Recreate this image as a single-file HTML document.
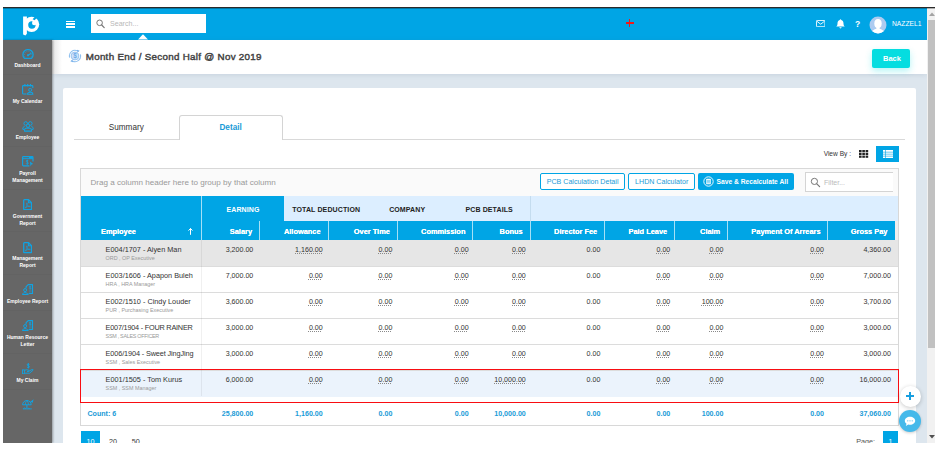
<!DOCTYPE html>
<html><head><meta charset="utf-8">
<style>
*{box-sizing:border-box;margin:0;padding:0}
html,body{width:944px;height:450px;background:#fff;overflow:hidden;font-family:"Liberation Sans",sans-serif;}
#shot{position:absolute;left:3px;top:7px;width:932px;height:436px;overflow:hidden;background:#dde6ee;}
.abs{position:absolute}
#topline{position:absolute;left:0;top:0;width:932px;height:1px;background:#2a2a2a;z-index:50}
#hdr{position:absolute;left:0;top:1px;width:924px;height:32px;background:#00a5e5;}
#side{position:absolute;left:0;top:33px;width:49px;height:403px;background:#666;box-shadow:1px 0 2px rgba(0,0,0,.35);z-index:5}
#titlebar{position:absolute;left:49px;top:33px;width:875px;height:34px;background:#fff;box-shadow:0 1px 5px rgba(60,90,120,.13)}
#card{position:absolute;left:60px;top:81px;width:853px;height:360px;background:#fff;border-radius:2px}
#sb{position:absolute;left:924px;top:1px;width:8px;height:435px;background:#f1f1f1}
#sbthumb{position:absolute;left:1px;top:12px;width:7px;height:328px;background:#c1c1c1}
.si{position:absolute;left:19px}
.sl{position:absolute;left:0;width:49px;text-align:center;font-size:5px;font-weight:bold;color:#fff;line-height:6px;white-space:nowrap;opacity:.999}
.t{position:absolute;white-space:nowrap;line-height:1}
</style></head><body>
<div id="shot">
<div id="topline"></div><div class="abs" style="left:0;top:1px;width:932px;height:1px;background:rgba(0,0,0,.28);z-index:50"></div>
<div id="hdr">
<svg class="abs" style="left:19px;top:8px" width="18" height="21" viewBox="0 0 18 21"><path d="M1.1 0.4 L4.9 0.4 L4.9 17.8 L3.4 19.6 L1.1 18.4 Z" fill="#fff"/><circle cx="9.6" cy="8.3" r="7.6" fill="#fff"/><circle cx="9.9" cy="9" r="3.7" fill="#00a5e5"/><circle cx="12.3" cy="6.9" r="2.3" fill="#fff"/><path d="M12.6 4.2 L15.4 1.2 L13 0.6 L10.6 3.2Z" fill="#00a5e5"/></svg>
<div class="abs" style="left:63px;top:12.5px;width:9px;height:1.6px;background:#fff"></div>
<div class="abs" style="left:63px;top:15.3px;width:9px;height:1.6px;background:#fff"></div>
<div class="abs" style="left:63px;top:18.1px;width:9px;height:1.6px;background:#fff"></div>
<div class="abs" style="left:88px;top:6px;width:115px;height:19px;background:#fff"></div>
<svg class="abs" style="left:92px;top:10px" width="12" height="12" viewBox="0 0 12 12"><circle cx="4.6" cy="4.8" r="2.8" fill="none" stroke="#777" stroke-width="1"/><path d="M6.7 7 L9.2 9.6" stroke="#777" stroke-width="1.2" stroke-linecap="round"/></svg>
<div class="t" style="left:107px;top:13px;font-size:7.1px;color:#b8b8b8">Search...</div>
<svg class="abs" style="left:135px;top:26.2px" width="10" height="5.8" viewBox="0 0 10.4 5.5"><path d="M0 5.5 L5.2 0 L10.4 5.5Z" fill="#fff"/></svg>
<div class="abs" style="left:622.5px;top:14.2px;width:8px;height:1.6px;background:#f21818"></div><div class="abs" style="left:625.7px;top:11px;width:1.6px;height:8px;background:#f21818"></div>
<svg class="abs" style="left:813px;top:12px" width="9.4" height="7.2" viewBox="0 0 9.4 7.2"><rect x="0.45" y="0.45" width="8.5" height="6.3" rx="0.8" fill="none" stroke="#fff" stroke-width="0.9"/><path d="M0.8 1.2 L4.7 4.2 L8.6 1.2" fill="none" stroke="#fff" stroke-width="0.9"/></svg>
<svg class="abs" style="left:833px;top:11px" width="9" height="10" viewBox="0 0 9 10"><path d="M4.5 0.3 C5 0.3 5.2 0.7 5.2 1.1 C6.8 1.5 7.5 2.8 7.5 4.4 C7.5 6 8 6.8 8.8 7.5 L0.2 7.5 C1 6.8 1.5 6 1.5 4.4 C1.5 2.8 2.2 1.5 3.8 1.1 C3.8 0.7 4 0.3 4.5 0.3Z M3.4 8.2 L5.6 8.2 C5.6 8.9 5.1 9.4 4.5 9.4 C3.9 9.4 3.4 8.9 3.4 8.2Z" fill="#fff"/></svg>
<div class="t" style="left:852px;top:12px;font-size:8.5px;font-weight:bold;color:#fff">?</div>
<svg class="abs" style="left:866px;top:8px" width="18" height="18" viewBox="0 0 18 18"><defs><clipPath id="av"><circle cx="9" cy="9" r="8.5"/></clipPath></defs><circle cx="9" cy="9" r="8.5" fill="#adcbf0"/><g clip-path="url(#av)" fill="#fff"><ellipse cx="9" cy="7.6" rx="3.7" ry="4.5"/><path d="M2.2 18 C2.6 14.2 5.5 13.4 7.4 12.8 L7.4 11 L10.6 11 L10.6 12.8 C12.5 13.4 15.4 14.2 15.8 18Z"/></g></svg>
<div class="t" style="left:889px;top:13px;font-size:6.7px;color:#fff">NAZZEL1</div>
</div>
<div id="titlebar">
<div class="abs" style="left:0;top:0;width:10px;height:34px;background:linear-gradient(90deg,#e4e4e4,#fff)"></div>
<svg class="abs" style="left:15.8px;top:8.9px" width="14" height="14" viewBox="0 0 14 14"><circle cx="7" cy="7" r="3.9" fill="#cfe3f9" stroke="#86b9ec" stroke-width="0.8"/><path d="M1.7 8.6 A5.5 5.5 0 0 1 9.6 2.1" fill="none" stroke="#8fc0ef" stroke-width="1.1"/><path d="M12.3 5.4 A5.5 5.5 0 0 1 4.4 11.9" fill="none" stroke="#8fc0ef" stroke-width="1.1"/><path d="M9 0.8 L11.6 1.8 L9.6 3.6Z M5 13.2 L2.4 12.2 L4.4 10.4Z" fill="#6eaae8"/><text x="7" y="9.3" font-size="6.4" font-weight="bold" text-anchor="middle" fill="#6eaae8" font-family="Liberation Sans">$</text></svg>
<div class="t" id="ttl" style="left:33.7px;top:11.5px;font-size:9.8px;letter-spacing:0.29px;font-weight:normal;color:#444;-webkit-text-stroke:0.45px #444">Month End / Second Half @ Nov 2019</div>
<div class="abs" style="left:820px;top:9px;width:38px;height:19px;background:#05dde0;border-radius:2px;box-shadow:0 3px 7px rgba(5,221,224,.3)"></div>
<div class="t" style="left:831px;top:15px;font-size:7.5px;font-weight:bold;color:#fff">Back</div>
</div>
<div id="side"><svg class="abs" style="left:18.5px;top:8.9px" width="12" height="11" viewBox="0 0 12 11"><path d="M2.4 9.3 A5.1 5.1 0 1 1 9.6 9.3 Z" fill="none" stroke="#10a3e2" stroke-width="1.3" stroke-linejoin="round"/><path d="M2.9 7.6 A3.6 3.6 0 1 1 9.1 7.6" fill="none" stroke="#10a3e2" stroke-width="1.1" stroke-dasharray="0.7 1.3" opacity=".75"/><path d="M6 6.3 L8.9 4.5" stroke="#10a3e2" stroke-width="1.2" stroke-linecap="round"/><circle cx="6" cy="6.3" r="1.15" fill="#10a3e2"/></svg><div class="sl" style="top:22.4px">Dashboard</div><div class="abs" style="left:0;top:34.0px;width:49px;height:1px;background:#636363"></div><svg class="si" style="top:44.2px" width="12" height="11" viewBox="0 0 12 11"><path d="M4.6 10 L1.3 10 Q0.6 10 0.6 9.3 L0.6 2.3 Q0.6 1.6 1.3 1.6 L10.1 1.6 Q10.8 1.6 10.8 2.3 L10.8 3.9" fill="none" stroke="#10a3e2" stroke-width="1.15"/><path d="M2.9 0.5 L2.9 1.8 M5.7 0.5 L5.7 1.8 M8.5 0.5 L8.5 1.8" stroke="#10a3e2" stroke-width="1.2" stroke-linecap="round"/><circle cx="8.2" cy="5.9" r="1.55" fill="none" stroke="#10a3e2" stroke-width="1"/><path d="M5.5 10.2 C5.5 7.6 10.9 7.6 10.9 10.2 Z" fill="none" stroke="#10a3e2" stroke-width="1.05" stroke-linejoin="round"/></svg><div class="sl" style="top:58.2px">My Calendar</div><div class="abs" style="left:0;top:70.0px;width:49px;height:1px;background:#636363"></div><svg class="si" style="top:80.7px" width="12" height="11" viewBox="0 0 12 11"><circle cx="3.7" cy="2.5" r="1.8" fill="none" stroke="#10a3e2" stroke-width="1"/><circle cx="8.3" cy="2.5" r="1.8" fill="none" stroke="#10a3e2" stroke-width="1"/><ellipse cx="6" cy="4.7" rx="1.5" ry="1.8" fill="#666" stroke="#10a3e2" stroke-width="1"/><path d="M2.5 10.1 L2.5 8.9 Q2.5 7.3 4.6 7.1 L7.4 7.1 Q9.5 7.3 9.5 8.9 L9.5 10.1 Z" fill="none" stroke="#10a3e2" stroke-width="1.05" stroke-linejoin="round"/><path d="M2.3 8.7 L0.7 8.2 Q0.5 6 2.7 5.2 M9.7 8.7 L11.3 8.2 Q11.5 6 9.3 5.2" fill="none" stroke="#10a3e2" stroke-width="1"/></svg><div class="sl" style="top:94.0px">Employee</div><div class="abs" style="left:0;top:106.0px;width:49px;height:1px;background:#636363"></div><svg class="si" style="top:116.1px" width="12" height="11" viewBox="0 0 12 11"><path d="M7.4 9.8 L1.4 9.8 Q0.6 9.8 0.6 9 L0.6 1.4 Q0.6 0.6 1.4 0.6 L10.2 0.6 Q11 0.6 11 1.4 L11 5.4" fill="none" stroke="#10a3e2" stroke-width="1.15"/><path d="M0.6 2.7 L11 2.7" stroke="#10a3e2" stroke-width="1"/><rect x="7" y="0.7" width="3.8" height="2" fill="#10a3e2"/><path d="M6.3 5 C6.2 4.2 4.2 4.1 4.2 5.2 C4.2 6.3 6.4 6 6.4 7.2 C6.4 8.3 4.2 8.2 4.1 7.4 M5.3 3.7 L5.3 8.8" fill="none" stroke="#10a3e2" stroke-width="0.85"/><path d="M7.9 5.4 L11.2 8 L9.4 8.5 L8.6 10.4 Z" fill="#10a3e2"/></svg><div class="sl" style="top:130.0px">Payroll</div><div class="sl" style="top:137.2px">Management</div><div class="abs" style="left:0;top:148.5px;width:49px;height:1px;background:#636363"></div><svg class="si" style="top:158.9px;left:20px" width="9.2" height="11.4" viewBox="0 0 9.2 11.4"><path d="M1.6 0.7 L5.6 0.7 L8.5 3.6 L8.5 9.9 Q8.5 10.7 7.7 10.7 L1.5 10.7 Q0.7 10.7 0.7 9.9 L0.7 1.5 Q0.7 0.7 1.5 0.7Z" fill="none" stroke="#10a3e2" stroke-width="1.3" stroke-linejoin="round"/><path d="M5.4 0.9 L5.4 3.8 L8.3 3.8" fill="none" stroke="#10a3e2" stroke-width="1.1"/><path d="M2.3 8.9 C3.4 7.8 4.3 5.8 4.2 4.2 C4.2 3.6 3.5 3.7 3.6 4.4 C3.8 6 5.2 7.5 6.9 7.7 C7.5 7.7 7.3 7 6.6 7.1 C5.1 7.2 3.4 7.9 2.3 8.9Z" fill="none" stroke="#10a3e2" stroke-width="0.7"/></svg><div class="sl" style="top:173.2px">Government</div><div class="sl" style="top:180.2px">Report</div><div class="abs" style="left:0;top:191.0px;width:49px;height:1px;background:#636363"></div><svg class="si" style="top:202.2px;left:20px" width="9.2" height="11.4" viewBox="0 0 9.2 11.4"><path d="M1.6 0.7 L5.6 0.7 L8.5 3.6 L8.5 9.9 Q8.5 10.7 7.7 10.7 L1.5 10.7 Q0.7 10.7 0.7 9.9 L0.7 1.5 Q0.7 0.7 1.5 0.7Z" fill="none" stroke="#10a3e2" stroke-width="1.3" stroke-linejoin="round"/><path d="M5.4 0.9 L5.4 3.8 L8.3 3.8" fill="none" stroke="#10a3e2" stroke-width="1.1"/><path d="M2.3 8.9 C3.4 7.8 4.3 5.8 4.2 4.2 C4.2 3.6 3.5 3.7 3.6 4.4 C3.8 6 5.2 7.5 6.9 7.7 C7.5 7.7 7.3 7 6.6 7.1 C5.1 7.2 3.4 7.9 2.3 8.9Z" fill="none" stroke="#10a3e2" stroke-width="0.7"/></svg><div class="sl" style="top:215.4px">Management</div><div class="sl" style="top:222.4px">Report</div><div class="abs" style="left:0;top:233.5px;width:49px;height:1px;background:#636363"></div><svg class="si" style="top:244px" width="12" height="11" viewBox="0 0 12 11"><path d="M4.1 4.6 L4.1 2.7 L6.2 0.6 L10.5 0.6 L10.5 9.5 L6.6 9.5" fill="none" stroke="#10a3e2" stroke-width="1.15" stroke-linejoin="round"/><path d="M8.8 2.7 C8.7 2.1 7.4 2.1 7.4 2.9 C7.4 3.7 8.9 3.5 8.9 4.4 C8.9 5.2 7.4 5.1 7.3 4.5 M8.1 1.7 L8.1 5.7" fill="none" stroke="#10a3e2" stroke-width="0.75"/><path d="M6.9 6.9 L9.5 6.9 M6.9 8 L9.5 8" stroke="#10a3e2" stroke-width="0.6" opacity=".8"/><circle cx="3.1" cy="6.1" r="1.5" fill="none" stroke="#10a3e2" stroke-width="1"/><path d="M0.6 10.4 C0.6 8 5.6 8 5.6 10.4 Z" fill="none" stroke="#10a3e2" stroke-width="1" stroke-linejoin="round"/><path d="M0.3 10.5 L6.6 10.5" stroke="#10a3e2" stroke-width="0.9"/></svg><div class="sl" style="top:258.2px">Employee Report</div><div class="abs" style="left:0;top:269.5px;width:49px;height:1px;background:#636363"></div><svg class="si" style="top:280.4px" width="12" height="11" viewBox="0 0 12 11"><path d="M4.1 4.6 L4.1 2.7 L6.2 0.6 L10.5 0.6 L10.5 9.5 L6.6 9.5" fill="none" stroke="#10a3e2" stroke-width="1.15" stroke-linejoin="round"/><path d="M8.8 2.7 C8.7 2.1 7.4 2.1 7.4 2.9 C7.4 3.7 8.9 3.5 8.9 4.4 C8.9 5.2 7.4 5.1 7.3 4.5 M8.1 1.7 L8.1 5.7" fill="none" stroke="#10a3e2" stroke-width="0.75"/><path d="M6.9 6.9 L9.5 6.9 M6.9 8 L9.5 8" stroke="#10a3e2" stroke-width="0.6" opacity=".8"/><circle cx="3.1" cy="6.1" r="1.5" fill="none" stroke="#10a3e2" stroke-width="1"/><path d="M0.6 10.4 C0.6 8 5.6 8 5.6 10.4 Z" fill="none" stroke="#10a3e2" stroke-width="1" stroke-linejoin="round"/><path d="M0.3 10.5 L6.6 10.5" stroke="#10a3e2" stroke-width="0.9"/></svg><div class="sl" style="top:294.0px">Human Resource</div><div class="sl" style="top:301.0px">Letter</div><div class="abs" style="left:0;top:312.5px;width:49px;height:1px;background:#636363"></div><svg class="si" style="top:322.8px" width="12" height="11.4" viewBox="0 0 12 11.4"><path d="M7.3 1.6 C7.1 0.7 5.2 0.7 5.2 1.8 C5.2 2.9 7.4 2.6 7.4 3.8 C7.4 4.9 5.2 4.8 5 3.9 M6.3 0.1 L6.3 5.5" fill="none" stroke="#10a3e2" stroke-width="0.95"/><rect x="0.5" y="6.9" width="1.9" height="3.9" fill="none" stroke="#10a3e2" stroke-width="0.9"/><path d="M2.6 7.3 L4.6 6.7 L7 7.3 Q7.8 7.7 7.2 8.3 L5 8.5 M7.5 7.8 L10.2 6.5 Q11.5 6.3 11.1 7.2 L7.6 10.2 L2.6 10.2" fill="none" stroke="#10a3e2" stroke-width="0.95" stroke-linejoin="round"/></svg><div class="sl" style="top:337.0px">My Claim</div><div class="abs" style="left:0;top:348.5px;width:49px;height:1px;background:#636363"></div><svg class="si" style="top:359.3px" width="12" height="11" viewBox="0 0 12 11"><path d="M0.6 5.8 A4.3 4.3 0 0 1 9.2 5.8 Z" fill="none" stroke="#10a3e2" stroke-width="1" stroke-linejoin="round"/><path d="M3.3 5.8 Q3.5 2.6 4.9 1.5 Q6.3 2.6 6.5 5.8" fill="none" stroke="#10a3e2" stroke-width="0.8"/><path d="M4.9 5.8 L4.9 9.4" stroke="#10a3e2" stroke-width="1"/><path d="M0.8 9.9 L9.8 9.9" stroke="#10a3e2" stroke-width="0.9"/><path d="M1.4 9.7 Q2.4 8.3 3.8 9.6 M5.8 9.7 Q6.6 8.9 7.6 9.7" fill="none" stroke="#10a3e2" stroke-width="0.8"/><path d="M8 3.1 L11.6 0.3 L10.6 3.9 L9.8 2.9 L8.6 4 L8.5 2.9 Z" fill="#10a3e2"/></svg></div>
<div id="card"></div>
<div id="o" style="position:absolute;left:-3px;top:-7px;width:944px;height:450px"><!--GRID-->
<div class="abs" style="left:74.0px;top:139.0px;width:831.0px;height:1.0px;background:#d9d9d9"></div>
<div class="abs" style="left:178.7px;top:114.8px;width:103.9px;height:25.2px;background:#fff;border:1px solid #d4d4d4;border-bottom:none;border-radius:3px 3px 0 0"></div>
<div class="t" style="left:26.3px;width:200px;text-align:center;top:123.8px;font-size:8.2px;color:#333">Summary</div>
<div class="t" style="left:130.6px;width:200px;text-align:center;top:123.8px;font-size:8.2px;color:#1a9bd7;font-weight:bold">Detail</div>
<div class="t" style="right:93.0px;top:150.7px;font-size:6.6px;color:#333">View By :</div>
<svg class="abs" style="left:859.3px;top:149.5px" width="9.4" height="8" viewBox="0 0 9.4 8"><g fill="#222"><rect x="0.0" y="0.0" width="2.6" height="2.2"/><rect x="0.0" y="2.8" width="2.6" height="2.2"/><rect x="0.0" y="5.6" width="2.6" height="2.2"/><rect x="3.3" y="0.0" width="2.6" height="2.2"/><rect x="3.3" y="2.8" width="2.6" height="2.2"/><rect x="3.3" y="5.6" width="2.6" height="2.2"/><rect x="6.6" y="0.0" width="2.6" height="2.2"/><rect x="6.6" y="2.8" width="2.6" height="2.2"/><rect x="6.6" y="5.6" width="2.6" height="2.2"/></g></svg>
<div class="abs" style="left:876.0px;top:146.0px;width:22.7px;height:16.0px;background:#00a5e5"></div>
<svg class="abs" style="left:882.5px;top:150px" width="10" height="8" viewBox="0 0 10 8"><rect x="0" y="0" width="10" height="8" fill="#fff"/><g fill="#00a5e5"><rect x="2.4" y="0" width="0.6" height="8"/><rect x="0" y="1.8" width="10" height="0.6"/><rect x="0" y="3.8" width="10" height="0.6"/><rect x="0" y="5.8" width="10" height="0.6"/></g></svg>
<div class="abs" style="left:80.2px;top:168.0px;width:818.5px;height:257.5px;background:#fff;border:1px solid #d8d8d8"></div>
<div class="abs" style="left:81.2px;top:169.0px;width:816.5px;height:27.0px;background:#fafafa"></div>
<div class="t" style="left:90.4px;top:178.5px;font-size:8.1px;color:#999">Drag a column header here to group by that column</div>
<div class="abs" style="left:539.7px;top:173.3px;width:85.8px;height:16.6px;background:#fff;border:1px solid #00a5e5;border-radius:2px"></div>
<div class="t" style="left:482.6px;width:200px;text-align:center;top:179.3px;font-size:7.1px;color:#1a9bd7">PCB Calculation Detail</div>
<div class="abs" style="left:628.0px;top:173.3px;width:67.4px;height:16.6px;background:#fff;border:1px solid #00a5e5;border-radius:2px"></div>
<div class="t" style="left:561.7px;width:200px;text-align:center;top:179.3px;font-size:7.1px;color:#1a9bd7">LHDN Calculator</div>
<div class="abs" style="left:698.0px;top:173.3px;width:95.9px;height:16.6px;background:#00a5e5;border-radius:2px"></div>
<svg class="abs" style="left:702.5px;top:176.3px" width="11" height="11" viewBox="0 0 11 11"><circle cx="5.5" cy="5.5" r="4.7" fill="none" stroke="#fff" stroke-width="0.9"/><rect x="3.2" y="2.8" width="4.6" height="5.4" rx="0.5" fill="#fff"/><path d="M3.8 4.4 L7.2 4.4 M3.8 5.6 L7.2 5.6 M3.8 6.8 L7.2 6.8" stroke="#00a5e5" stroke-width="0.5"/></svg>
<div class="t" style="left:716.5px;top:179.4px;font-size:6.7px;color:#fff;font-weight:bold">Save &amp; Recalculate All</div>
<div class="abs" style="left:805.0px;top:172.4px;width:88.3px;height:19.2px;background:#fff;border:1px solid #d4d4d4;border-right:none"></div>
<svg class="abs" style="left:810px;top:177px" width="11" height="11" viewBox="0 0 11 11"><circle cx="4.4" cy="4.4" r="3.1" fill="none" stroke="#777" stroke-width="1"/><path d="M6.8 6.8 L9.6 9.6" stroke="#777" stroke-width="1.2" stroke-linecap="round"/></svg>
<div class="t" style="left:824.0px;top:178.7px;font-size:7px;color:#bbb">Filter...</div>
<div class="abs" style="left:81.0px;top:196.0px;width:817.0px;height:25.0px;background:#dceeff"></div>
<div class="abs" style="left:81.0px;top:196.0px;width:203.0px;height:25.0px;background:#00a5e5"></div>
<div class="abs" style="left:81.0px;top:221.0px;width:814.0px;height:19.3px;background:#00a5e5"></div>
<div class="abs" style="left:895.0px;top:221.0px;width:3.0px;height:19.3px;background:#efefef"></div>
<div class="abs" style="left:201.0px;top:196.0px;width:1.0px;height:44.3px;background:rgba(255,255,255,.65)"></div>
<div class="abs" style="left:259.2px;top:221.0px;width:1.0px;height:19.3px;background:rgba(255,255,255,.65)"></div>
<div class="abs" style="left:327.6px;top:221.0px;width:1.0px;height:19.3px;background:rgba(255,255,255,.65)"></div>
<div class="abs" style="left:396.6px;top:221.0px;width:1.0px;height:19.3px;background:rgba(255,255,255,.65)"></div>
<div class="abs" style="left:471.9px;top:221.0px;width:1.0px;height:19.3px;background:rgba(255,255,255,.65)"></div>
<div class="abs" style="left:529.5px;top:221.0px;width:1.0px;height:19.3px;background:rgba(255,255,255,.65)"></div>
<div class="abs" style="left:603.7px;top:221.0px;width:1.0px;height:19.3px;background:rgba(255,255,255,.65)"></div>
<div class="abs" style="left:674.2px;top:221.0px;width:1.0px;height:19.3px;background:rgba(255,255,255,.65)"></div>
<div class="abs" style="left:727.0px;top:221.0px;width:1.0px;height:19.3px;background:rgba(255,255,255,.65)"></div>
<div class="abs" style="left:827.1px;top:221.0px;width:1.0px;height:19.3px;background:rgba(255,255,255,.65)"></div>
<div class="abs" style="left:529.6px;top:196.0px;width:0.8px;height:25.0px;background:rgba(190,215,235,.8)"></div>
<div class="t" style="left:143.0px;width:200px;text-align:center;top:206.0px;font-size:7px;color:#fff;font-weight:bold;letter-spacing:0.12px;">EARNING</div>
<div class="t" style="left:226.2px;width:200px;text-align:center;top:206.0px;font-size:7px;color:#222;font-weight:bold;letter-spacing:0.12px;">TOTAL DEDUCTION</div>
<div class="t" style="left:307.2px;width:200px;text-align:center;top:206.0px;font-size:7px;color:#222;font-weight:bold;letter-spacing:0.12px;">COMPANY</div>
<div class="t" style="left:389.2px;width:200px;text-align:center;top:206.0px;font-size:7px;color:#222;font-weight:bold;letter-spacing:0.12px;">PCB DETAILS</div>
<div class="t" style="left:101.0px;top:228.0px;font-size:7.4px;color:#fff;font-weight:bold;text-shadow:0 0 0.4px #fff">Employee</div>
<svg class="abs" style="left:187.5px;top:228px" width="5" height="7" viewBox="0 0 5 7"><path d="M2.5 0.4 L2.5 6.8 M0.5 2.6 L2.5 0.5 L4.5 2.6" fill="none" stroke="#fff" stroke-width="1"/></svg>
<div class="t" style="right:692.0px;top:228.0px;font-size:7.4px;color:#fff;font-weight:bold;text-shadow:0 0 0.4px #fff">Salary</div>
<div class="t" style="right:623.5px;top:228.0px;font-size:7.4px;color:#fff;font-weight:bold;text-shadow:0 0 0.4px #fff">Allowance</div>
<div class="t" style="right:554.2px;top:228.0px;font-size:7.4px;color:#fff;font-weight:bold;text-shadow:0 0 0.4px #fff">Over Time</div>
<div class="t" style="right:478.6px;top:228.0px;font-size:7.4px;color:#fff;font-weight:bold;text-shadow:0 0 0.4px #fff">Commission</div>
<div class="t" style="right:421.4px;top:228.0px;font-size:7.4px;color:#fff;font-weight:bold;text-shadow:0 0 0.4px #fff">Bonus</div>
<div class="t" style="right:346.8px;top:228.0px;font-size:7.4px;color:#fff;font-weight:bold;text-shadow:0 0 0.4px #fff">Director Fee</div>
<div class="t" style="right:276.9px;top:228.0px;font-size:7.4px;color:#fff;font-weight:bold;text-shadow:0 0 0.4px #fff">Paid Leave</div>
<div class="t" style="right:223.8px;top:228.0px;font-size:7.4px;color:#fff;font-weight:bold;text-shadow:0 0 0.4px #fff">Claim</div>
<div class="t" style="right:123.5px;top:228.0px;font-size:7.4px;color:#fff;font-weight:bold;text-shadow:0 0 0.4px #fff">Payment Of Arrears</div>
<div class="t" style="right:56.6px;top:228.0px;font-size:7.4px;color:#fff;font-weight:bold;text-shadow:0 0 0.4px #fff">Gross Pay</div>
<div class="abs" style="left:81.0px;top:240.3px;width:817.0px;height:26.1px;background:#e6e6e6"></div>
<div class="abs" style="left:81.0px;top:265.9px;width:817.0px;height:1.0px;background:#dcdcdc"></div>
<div class="t" style="left:105.6px;top:246.2px;font-size:7.3px;color:#333;letter-spacing:0px">E004/1707 - Aiyen Man</div>
<div class="t" style="left:105.6px;top:255.7px;font-size:5.4px;color:#999;letter-spacing:0px">ORD , OP Executive</div>
<div class="t" style="right:690.7px;top:247.1px;font-size:7.1px;color:#333;">3,200.00</div>
<div class="t" style="right:621.3px;top:247.1px;font-size:7.1px;color:#333;text-decoration:underline dotted #8a8a8a;text-decoration-thickness:1px;text-underline-offset:1.3px">1,160.00</div>
<div class="t" style="right:551.6px;top:247.1px;font-size:7.1px;color:#333;text-decoration:underline dotted #8a8a8a;text-decoration-thickness:1px;text-underline-offset:1.3px">0.00</div>
<div class="t" style="right:475.4px;top:247.1px;font-size:7.1px;color:#333;text-decoration:underline dotted #8a8a8a;text-decoration-thickness:1px;text-underline-offset:1.3px">0.00</div>
<div class="t" style="right:418.2px;top:247.1px;font-size:7.1px;color:#333;text-decoration:underline dotted #8a8a8a;text-decoration-thickness:1px;text-underline-offset:1.3px">0.00</div>
<div class="t" style="right:343.6px;top:247.1px;font-size:7.1px;color:#333;">0.00</div>
<div class="t" style="right:273.7px;top:247.1px;font-size:7.1px;color:#333;text-decoration:underline dotted #8a8a8a;text-decoration-thickness:1px;text-underline-offset:1.3px">0.00</div>
<div class="t" style="right:220.6px;top:247.1px;font-size:7.1px;color:#333;text-decoration:underline dotted #8a8a8a;text-decoration-thickness:1px;text-underline-offset:1.3px">0.00</div>
<div class="t" style="right:120.0px;top:247.1px;font-size:7.1px;color:#333;text-decoration:underline dotted #8a8a8a;text-decoration-thickness:1px;text-underline-offset:1.3px">0.00</div>
<div class="t" style="right:53.0px;top:247.1px;font-size:7.1px;color:#333;">4,360.00</div>
<div class="abs" style="left:81.0px;top:291.9px;width:817.0px;height:1.0px;background:#dcdcdc"></div>
<div class="t" style="left:105.6px;top:272.2px;font-size:7.3px;color:#333;letter-spacing:0px">E003/1606 - Apapon Buleh</div>
<div class="t" style="left:105.6px;top:281.7px;font-size:5.4px;color:#999;letter-spacing:0px">HRA , HRA Manager</div>
<div class="t" style="right:690.7px;top:273.1px;font-size:7.1px;color:#333;">7,000.00</div>
<div class="t" style="right:621.3px;top:273.1px;font-size:7.1px;color:#333;text-decoration:underline dotted #8a8a8a;text-decoration-thickness:1px;text-underline-offset:1.3px">0.00</div>
<div class="t" style="right:551.6px;top:273.1px;font-size:7.1px;color:#333;text-decoration:underline dotted #8a8a8a;text-decoration-thickness:1px;text-underline-offset:1.3px">0.00</div>
<div class="t" style="right:475.4px;top:273.1px;font-size:7.1px;color:#333;text-decoration:underline dotted #8a8a8a;text-decoration-thickness:1px;text-underline-offset:1.3px">0.00</div>
<div class="t" style="right:418.2px;top:273.1px;font-size:7.1px;color:#333;text-decoration:underline dotted #8a8a8a;text-decoration-thickness:1px;text-underline-offset:1.3px">0.00</div>
<div class="t" style="right:343.6px;top:273.1px;font-size:7.1px;color:#333;">0.00</div>
<div class="t" style="right:273.7px;top:273.1px;font-size:7.1px;color:#333;text-decoration:underline dotted #8a8a8a;text-decoration-thickness:1px;text-underline-offset:1.3px">0.00</div>
<div class="t" style="right:220.6px;top:273.1px;font-size:7.1px;color:#333;text-decoration:underline dotted #8a8a8a;text-decoration-thickness:1px;text-underline-offset:1.3px">0.00</div>
<div class="t" style="right:120.0px;top:273.1px;font-size:7.1px;color:#333;text-decoration:underline dotted #8a8a8a;text-decoration-thickness:1px;text-underline-offset:1.3px">0.00</div>
<div class="t" style="right:53.0px;top:273.1px;font-size:7.1px;color:#333;">7,000.00</div>
<div class="abs" style="left:81.0px;top:318.0px;width:817.0px;height:1.0px;background:#dcdcdc"></div>
<div class="t" style="left:105.6px;top:298.3px;font-size:7.3px;color:#333;letter-spacing:0px">E002/1510 - Cindy Louder</div>
<div class="t" style="left:105.6px;top:307.8px;font-size:5.4px;color:#999;letter-spacing:0px">PUR , Purchasing Executive</div>
<div class="t" style="right:690.7px;top:299.2px;font-size:7.1px;color:#333;">3,600.00</div>
<div class="t" style="right:621.3px;top:299.2px;font-size:7.1px;color:#333;text-decoration:underline dotted #8a8a8a;text-decoration-thickness:1px;text-underline-offset:1.3px">0.00</div>
<div class="t" style="right:551.6px;top:299.2px;font-size:7.1px;color:#333;text-decoration:underline dotted #8a8a8a;text-decoration-thickness:1px;text-underline-offset:1.3px">0.00</div>
<div class="t" style="right:475.4px;top:299.2px;font-size:7.1px;color:#333;text-decoration:underline dotted #8a8a8a;text-decoration-thickness:1px;text-underline-offset:1.3px">0.00</div>
<div class="t" style="right:418.2px;top:299.2px;font-size:7.1px;color:#333;text-decoration:underline dotted #8a8a8a;text-decoration-thickness:1px;text-underline-offset:1.3px">0.00</div>
<div class="t" style="right:343.6px;top:299.2px;font-size:7.1px;color:#333;">0.00</div>
<div class="t" style="right:273.7px;top:299.2px;font-size:7.1px;color:#333;text-decoration:underline dotted #8a8a8a;text-decoration-thickness:1px;text-underline-offset:1.3px">0.00</div>
<div class="t" style="right:220.6px;top:299.2px;font-size:7.1px;color:#333;text-decoration:underline dotted #8a8a8a;text-decoration-thickness:1px;text-underline-offset:1.3px">100.00</div>
<div class="t" style="right:120.0px;top:299.2px;font-size:7.1px;color:#333;text-decoration:underline dotted #8a8a8a;text-decoration-thickness:1px;text-underline-offset:1.3px">0.00</div>
<div class="t" style="right:53.0px;top:299.2px;font-size:7.1px;color:#333;">3,700.00</div>
<div class="abs" style="left:81.0px;top:344.0px;width:817.0px;height:1.0px;background:#dcdcdc"></div>
<div class="t" style="left:105.6px;top:324.3px;font-size:7.3px;color:#333;letter-spacing:-0.22px">E007/1904 - FOUR RAINER</div>
<div class="t" style="left:105.6px;top:333.8px;font-size:5.4px;color:#999;letter-spacing:-0.28px">SSM , SALES OFFICER</div>
<div class="t" style="right:690.7px;top:325.2px;font-size:7.1px;color:#333;">3,000.00</div>
<div class="t" style="right:621.3px;top:325.2px;font-size:7.1px;color:#333;text-decoration:underline dotted #8a8a8a;text-decoration-thickness:1px;text-underline-offset:1.3px">0.00</div>
<div class="t" style="right:551.6px;top:325.2px;font-size:7.1px;color:#333;text-decoration:underline dotted #8a8a8a;text-decoration-thickness:1px;text-underline-offset:1.3px">0.00</div>
<div class="t" style="right:475.4px;top:325.2px;font-size:7.1px;color:#333;text-decoration:underline dotted #8a8a8a;text-decoration-thickness:1px;text-underline-offset:1.3px">0.00</div>
<div class="t" style="right:418.2px;top:325.2px;font-size:7.1px;color:#333;text-decoration:underline dotted #8a8a8a;text-decoration-thickness:1px;text-underline-offset:1.3px">0.00</div>
<div class="t" style="right:343.6px;top:325.2px;font-size:7.1px;color:#333;">0.00</div>
<div class="t" style="right:273.7px;top:325.2px;font-size:7.1px;color:#333;text-decoration:underline dotted #8a8a8a;text-decoration-thickness:1px;text-underline-offset:1.3px">0.00</div>
<div class="t" style="right:220.6px;top:325.2px;font-size:7.1px;color:#333;text-decoration:underline dotted #8a8a8a;text-decoration-thickness:1px;text-underline-offset:1.3px">0.00</div>
<div class="t" style="right:120.0px;top:325.2px;font-size:7.1px;color:#333;text-decoration:underline dotted #8a8a8a;text-decoration-thickness:1px;text-underline-offset:1.3px">0.00</div>
<div class="t" style="right:53.0px;top:325.2px;font-size:7.1px;color:#333;">3,000.00</div>
<div class="abs" style="left:81.0px;top:370.1px;width:817.0px;height:1.0px;background:#dcdcdc"></div>
<div class="t" style="left:105.6px;top:350.4px;font-size:7.3px;color:#333;letter-spacing:-0.12px">E006/1904 - Sweet JingJing</div>
<div class="t" style="left:105.6px;top:359.9px;font-size:5.4px;color:#999;letter-spacing:0px">SSM , Sales Executive</div>
<div class="t" style="right:690.7px;top:351.3px;font-size:7.1px;color:#333;">3,000.00</div>
<div class="t" style="right:621.3px;top:351.3px;font-size:7.1px;color:#333;text-decoration:underline dotted #8a8a8a;text-decoration-thickness:1px;text-underline-offset:1.3px">0.00</div>
<div class="t" style="right:551.6px;top:351.3px;font-size:7.1px;color:#333;text-decoration:underline dotted #8a8a8a;text-decoration-thickness:1px;text-underline-offset:1.3px">0.00</div>
<div class="t" style="right:475.4px;top:351.3px;font-size:7.1px;color:#333;text-decoration:underline dotted #8a8a8a;text-decoration-thickness:1px;text-underline-offset:1.3px">0.00</div>
<div class="t" style="right:418.2px;top:351.3px;font-size:7.1px;color:#333;text-decoration:underline dotted #8a8a8a;text-decoration-thickness:1px;text-underline-offset:1.3px">0.00</div>
<div class="t" style="right:343.6px;top:351.3px;font-size:7.1px;color:#333;">0.00</div>
<div class="t" style="right:273.7px;top:351.3px;font-size:7.1px;color:#333;text-decoration:underline dotted #8a8a8a;text-decoration-thickness:1px;text-underline-offset:1.3px">0.00</div>
<div class="t" style="right:220.6px;top:351.3px;font-size:7.1px;color:#333;text-decoration:underline dotted #8a8a8a;text-decoration-thickness:1px;text-underline-offset:1.3px">0.00</div>
<div class="t" style="right:120.0px;top:351.3px;font-size:7.1px;color:#333;text-decoration:underline dotted #8a8a8a;text-decoration-thickness:1px;text-underline-offset:1.3px">0.00</div>
<div class="t" style="right:53.0px;top:351.3px;font-size:7.1px;color:#333;">3,000.00</div>
<div class="abs" style="left:81.0px;top:370.6px;width:817.0px;height:26.1px;background:#ebf3fc"></div>
<div class="t" style="left:105.6px;top:376.4px;font-size:7.3px;color:#333;letter-spacing:0px">E001/1505 - Tom Kurus</div>
<div class="t" style="left:105.6px;top:385.9px;font-size:5.4px;color:#999;letter-spacing:0px">SSM , SSM Manager</div>
<div class="t" style="right:690.7px;top:377.3px;font-size:7.1px;color:#333;">6,000.00</div>
<div class="t" style="right:621.3px;top:377.3px;font-size:7.1px;color:#333;text-decoration:underline dotted #8a8a8a;text-decoration-thickness:1px;text-underline-offset:1.3px">0.00</div>
<div class="t" style="right:551.6px;top:377.3px;font-size:7.1px;color:#333;text-decoration:underline dotted #8a8a8a;text-decoration-thickness:1px;text-underline-offset:1.3px">0.00</div>
<div class="t" style="right:475.4px;top:377.3px;font-size:7.1px;color:#333;text-decoration:underline dotted #8a8a8a;text-decoration-thickness:1px;text-underline-offset:1.3px">0.00</div>
<div class="t" style="right:418.2px;top:377.3px;font-size:7.1px;color:#333;text-decoration:underline dotted #8a8a8a;text-decoration-thickness:1px;text-underline-offset:1.3px">10,000.00</div>
<div class="t" style="right:343.6px;top:377.3px;font-size:7.1px;color:#333;">0.00</div>
<div class="t" style="right:273.7px;top:377.3px;font-size:7.1px;color:#333;text-decoration:underline dotted #8a8a8a;text-decoration-thickness:1px;text-underline-offset:1.3px">0.00</div>
<div class="t" style="right:220.6px;top:377.3px;font-size:7.1px;color:#333;text-decoration:underline dotted #8a8a8a;text-decoration-thickness:1px;text-underline-offset:1.3px">0.00</div>
<div class="t" style="right:120.0px;top:377.3px;font-size:7.1px;color:#333;text-decoration:underline dotted #8a8a8a;text-decoration-thickness:1px;text-underline-offset:1.3px">0.00</div>
<div class="t" style="right:53.0px;top:377.3px;font-size:7.1px;color:#333;">16,000.00</div>
<div class="abs" style="left:201.0px;top:240.3px;width:1.0px;height:156.2px;background:rgba(0,0,0,.06)"></div>
<div class="t" style="left:87.5px;top:411.1px;font-size:7.1px;color:#1a9bd7;font-weight:bold">Count: 6</div>
<div class="t" style="right:690.7px;top:411.1px;font-size:7.1px;color:#1a9bd7;font-weight:bold">25,800.00</div>
<div class="t" style="right:621.3px;top:411.1px;font-size:7.1px;color:#1a9bd7;font-weight:bold">1,160.00</div>
<div class="t" style="right:551.6px;top:411.1px;font-size:7.1px;color:#1a9bd7;font-weight:bold">0.00</div>
<div class="t" style="right:475.4px;top:411.1px;font-size:7.1px;color:#1a9bd7;font-weight:bold">0.00</div>
<div class="t" style="right:418.2px;top:411.1px;font-size:7.1px;color:#1a9bd7;font-weight:bold">10,000.00</div>
<div class="t" style="right:343.6px;top:411.1px;font-size:7.1px;color:#1a9bd7;font-weight:bold">0.00</div>
<div class="t" style="right:273.7px;top:411.1px;font-size:7.1px;color:#1a9bd7;font-weight:bold">0.00</div>
<div class="t" style="right:220.6px;top:411.1px;font-size:7.1px;color:#1a9bd7;font-weight:bold">100.00</div>
<div class="t" style="right:120.0px;top:411.1px;font-size:7.1px;color:#1a9bd7;font-weight:bold">0.00</div>
<div class="t" style="right:53.0px;top:411.1px;font-size:7.1px;color:#1a9bd7;font-weight:bold">37,060.00</div>
<div class="abs" style="left:80.3px;top:368.5px;width:819.2px;height:34.3px;border:1.5px solid #f80d12"></div>
<div class="abs" style="left:80.8px;top:431.4px;width:19.4px;height:18.6px;background:#00a5e5"></div>
<div class="t" style="left:-9.5px;width:200px;text-align:center;top:438.2px;font-size:7.2px;color:#fff">10</div>
<div class="t" style="left:12.9px;width:200px;text-align:center;top:438.2px;font-size:7.2px;color:#333">20</div>
<div class="t" style="left:35.7px;width:200px;text-align:center;top:438.2px;font-size:7.2px;color:#333">50</div>
<div class="t" style="right:69.0px;top:438.2px;font-size:7.2px;color:#555">Page:</div>
<div class="abs" style="left:883.3px;top:431.4px;width:14.4px;height:18.6px;background:#00a5e5"></div>
<div class="t" style="left:790.5px;width:200px;text-align:center;top:438.2px;font-size:7.2px;color:#fff">1</div>
<div class="abs" style="left:899.6px;top:385.6px;width:21.4px;height:21.4px;background:#fff;border-radius:50%;box-shadow:0 1px 4px rgba(0,0,0,.22)"></div>
<div class="abs" style="left:906.2px;top:395.3px;width:8.2px;height:2.0px;background:#189fe0"></div>
<div class="abs" style="left:909.3px;top:392.2px;width:2.0px;height:8.2px;background:#189fe0"></div>
<div class="abs" style="left:899.0px;top:410.2px;width:22.0px;height:22.0px;background:#45b9ea;border-radius:50%;box-shadow:0 1px 3px rgba(0,0,0,.2)"></div>
<svg class="abs" style="left:904px;top:416px" width="12" height="11" viewBox="0 0 12 11"><path d="M6 0.8 C9 0.8 11.2 2.6 11.2 4.8 C11.2 7 9 8.8 6 8.8 C5.4 8.8 4.8 8.7 4.3 8.6 L1.8 10 L2.5 7.8 C1.4 7 0.8 6 0.8 4.8 C0.8 2.6 3 0.8 6 0.8Z" fill="#fff"/><circle cx="3.8" cy="4.8" r="0.6" fill="#45b9ea"/><circle cx="6" cy="4.8" r="0.6" fill="#45b9ea"/><circle cx="8.2" cy="4.8" r="0.6" fill="#45b9ea"/></svg>
<!--/GRID--></div>
<div id="sb"><div id="sbthumb"></div><svg class="abs" style="left:1.5px;top:4px" width="6" height="4" viewBox="0 0 6 4"><path d="M0 4 L3 0.5 L6 4Z" fill="#a3a3a3"/></svg><svg class="abs" style="left:1.5px;top:426.5px" width="6" height="4" viewBox="0 0 6 4"><path d="M0 0 L3 3.5 L6 0Z" fill="#505050"/></svg></div>
</div>
</body></html>
